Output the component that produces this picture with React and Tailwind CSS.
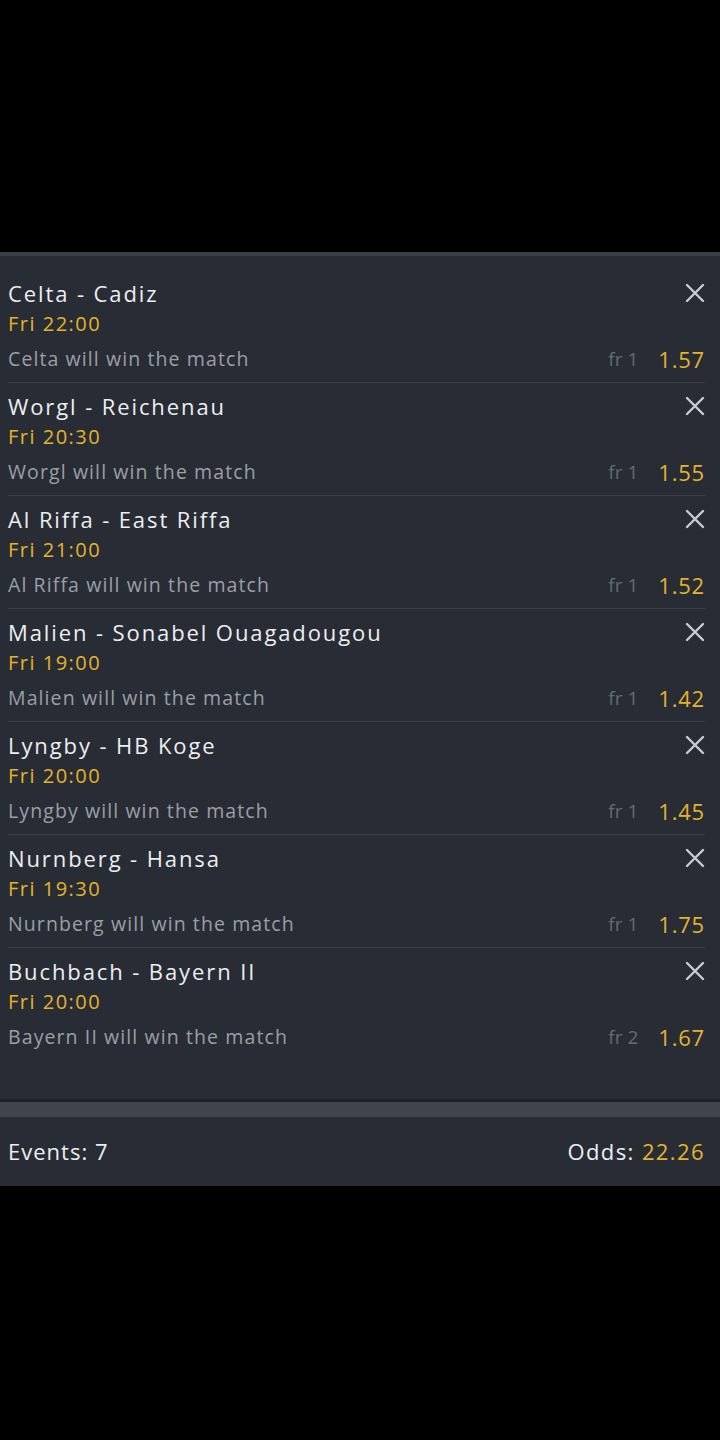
import React from 'react';

const bets = [
  { match: 'Celta - Cadiz', time: 'Fri 22:00', pick: 'Celta will win the match', fr: 'fr 1', odds: '1.57' },
  { match: 'Worgl - Reichenau', time: 'Fri 20:30', pick: 'Worgl will win the match', fr: 'fr 1', odds: '1.55' },
  { match: 'Al Riffa - East Riffa', time: 'Fri 21:00', pick: 'Al Riffa will win the match', fr: 'fr 1', odds: '1.52' },
  { match: 'Malien - Sonabel Ouagadougou', time: 'Fri 19:00', pick: 'Malien will win the match', fr: 'fr 1', odds: '1.42' },
  { match: 'Lyngby - HB Koge', time: 'Fri 20:00', pick: 'Lyngby will win the match', fr: 'fr 1', odds: '1.45' },
  { match: 'Nurnberg - Hansa', time: 'Fri 19:30', pick: 'Nurnberg will win the match', fr: 'fr 1', odds: '1.75' },
  { match: 'Buchbach - Bayern II', time: 'Fri 20:00', pick: 'Bayern II will win the match', fr: 'fr 2', odds: '1.67' },
];

const CloseIcon = () => (
  <svg width="22" height="22" viewBox="0 0 22 22" fill="none" stroke="#c9ccd1" strokeWidth="2.4" strokeLinecap="round">
    <path d="M3 3L19 19M19 3L3 19" />
  </svg>
);

const BetRow = ({ bet, last }) => (
  <div className={last ? 'pt-[9px] pb-[9px]' : 'pt-[9px] pb-[9px] border-b border-[#3b3f47]'}>
    <div className="flex items-center justify-between h-[28px]">
      <span className="text-[22px] leading-[28px] text-[#eceef0] tracking-[1.9px]">{bet.match}</span>
      <span className="mr-[-1px]"><CloseIcon /></span>
    </div>
    <div className="mt-[3px] text-[20px] leading-[28px] text-[#e5b32b] tracking-[1.5px]">{bet.time}</div>
    <div className="mt-[7px] flex items-center justify-between h-[28px]">
      <span className="text-[19.5px] leading-[28px] text-[#9b9fa6] tracking-[1.1px]">{bet.pick}</span>
      <span className="flex items-center">
        <span className="text-[19px] leading-[28px] text-[#666a72]">{bet.fr}</span>
        <span className="ml-[20px] text-[22px] leading-[28px] text-[#e5b32b] tracking-[0.8px]">{bet.odds}</span>
      </span>
    </div>
  </div>
);

export default function App() {
  return (
    <div className="w-[720px] h-[1440px] bg-black flex flex-col" style={{ fontFamily: '"Open Sans", Lato, sans-serif' }}>
      <div className="h-[252px]" />
      <div className="h-[4px] bg-[#3a3e46]" />
      <div className="bg-[#282c34]">
        <div className="pt-[14px] pl-[8px] pr-[15px]">
          {bets.map((b, i) => (
            <BetRow key={i} bet={b} last={i === bets.length - 1} />
          ))}
        </div>
        <div className="h-[39px]" />
        <div className="h-[3px] bg-[#1f2228]" />
        <div className="h-[15px] bg-[#40444c]" />
        <div className="h-[69px] flex items-center justify-between pl-[8px] pr-[15px]">
          <span className="text-[22px] text-[#eceef0] tracking-[1px]">Events: 7</span>
          <span className="text-[22px] text-[#eceef0] tracking-[1.4px]">
            Odds: <span className="text-[#e5b32b]">22.26</span>
          </span>
        </div>
      </div>
      <div className="flex-1 bg-black" />
    </div>
  );
}
